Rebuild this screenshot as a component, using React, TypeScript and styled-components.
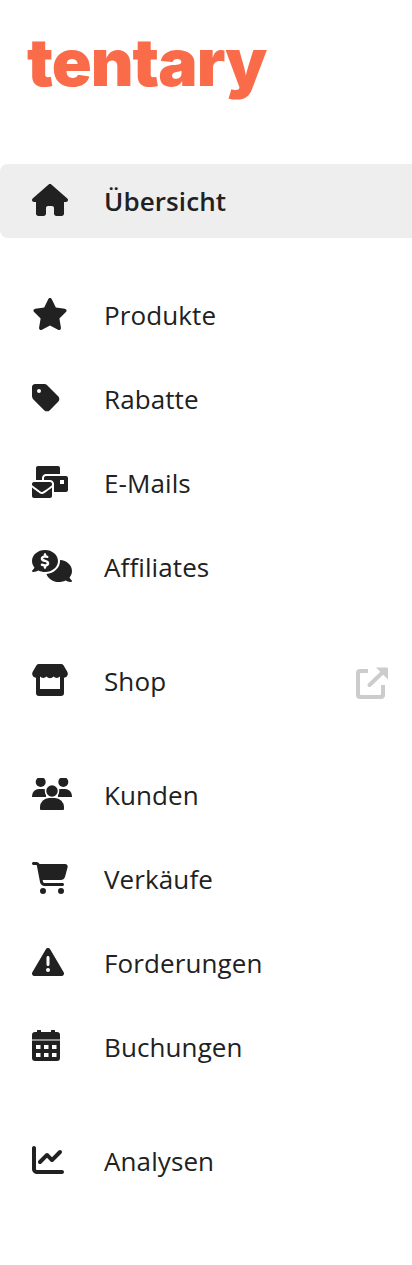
import React from "react";
import styled, { createGlobalStyle } from "styled-components";
import { FaMailBulk } from "react-icons/fa";
import {
  FaHouse,
  FaStar,
  FaTag,
  FaCommentsDollar,
  FaCartShopping,
  FaTriangleExclamation,
  FaChartLine,
} from "react-icons/fa6";

const GlobalStyle = createGlobalStyle`
  html, body {
    margin: 0;
    padding: 0;
    background: #ffffff;
  }
`;

const Sidebar = styled.nav`
  width: 412px;
  height: 1265px;
  overflow: hidden;
  display: flex;
  flex-direction: column;
  font-family: "Open Sans", "Noto Sans", sans-serif;
  color: #212121;
`;

const LogoBox = styled.div`
  height: 164px;
  padding-left: 27px;
  box-sizing: border-box;
`;

const Logo = styled.span`
  display: block;
  font-family: Inter, sans-serif;
  font-size: 66px;
  font-weight: 900;
  line-height: 124px;
  letter-spacing: -1px;
  color: #fa6b4a;
`;

const Group = styled.div`
  display: flex;
  flex-direction: column;
  gap: 10px;
  margin-bottom: 40px;
`;

const Row = styled.a<{ $active?: boolean }>`
  height: 74px;
  display: flex;
  align-items: center;
  padding: 0 24px 0 32px;
  border-radius: ${(p) => (p.$active ? "8px 0 0 8px" : "0")};
  background: ${(p) => (p.$active ? "#eeeeee" : "transparent")};
  font-size: 26px;
  letter-spacing: 0.1px;
  font-weight: ${(p) => (p.$active ? 600 : 400)};
`;

/* icons are 32px high, their width follows the glyph like the FA font does */
const IconBox = styled.span<{ $width: number }>`
  width: 72px;
  height: 36px;
  flex: none;
  display: flex;
  align-items: center;
  margin-top: -2px;

  svg {
    height: 32px;
    width: ${(p) => p.$width}px;
  }
`;

const Label = styled.span`
  flex: 1;
`;

const External = styled.svg`
  width: 32px;
  height: 32px;
  margin-top: 4px;
  fill: #cccccc;
`;

const ExternalShaft = styled.line`
  stroke: #cccccc;
  stroke-width: 4;
  stroke-linecap: round;
`;

const ShopIcon = () => (
  <svg viewBox="0 0 36 32" fill="currentColor">
    <path d="M7 0h22a3 3 0 0 1 2.500 1.300l3.500 6a4 4 0 0 1-2 6.200 4.500 4.500 0 0 1-5-1 4.500 4.500 0 0 1-6.500 0 4.500 4.500 0 0 1-7 0 4.500 4.500 0 0 1-6.500 0 4.500 4.500 0 0 1-5 1 4 4 0 0 1-2-6.200l3.500-6A3 3 0 0 1 7 0z" />
    <path d="M4 12h4v13h20V12h4v17a3 3 0 0 1-3 3H7a3 3 0 0 1-3-3z" />
  </svg>
);

const UsersIcon = () => (
  <svg viewBox="0 0 40 32" fill="currentColor">
    <circle cx="8.700" cy="4" r="5" />
    <circle cx="31.300" cy="4" r="5" />
    <path d="M0 19v-1a7 7 0 0 1 7-7h4a7 7 0 0 1 3 .7V19z" />
    <path d="M40 19v-1a7 7 0 0 0-7-7h-4a7 7 0 0 0-3 .7V19z" />
    <circle cx="20" cy="13" r="6.500" stroke="#ffffff" strokeWidth="1.500" />
    <path d="M8 31v-2a9 9 0 0 1 9-9h6a9 9 0 0 1 9 9v2a1 1 0 0 1-1 1H9a1 1 0 0 1-1-1z" />
  </svg>
);

const CalendarIcon = () => (
  <svg viewBox="0 0 28 32" fill="currentColor">
    <rect x="5" y="-1" width="4" height="6" rx="2" />
    <rect x="19" y="-1" width="4" height="6" rx="2" />
    <path d="M3 2h22a3 3 0 0 1 3 3v4.500H0V5a3 3 0 0 1 3-3z" />
    <path
      fillRule="evenodd"
      d="M0 10.500h28V28a3 3 0 0 1-3 3H3a3 3 0 0 1-3-3zM4 15v4h4.500v-4zM12 15v4h4.500v-4zM20 15v4h4.500v-4zM4 23v4h4.500v-4zM12 23v4h4.500v-4zM20 23v4h4.500v-4z"
    />
  </svg>
);

type Item = {
  icon: React.ReactNode;
  width: number;
  label: string;
  active?: boolean;
  external?: boolean;
};

const groups: Item[][] = [
  [{ icon: <FaHouse />, width: 36, label: "Übersicht", active: true }],
  [
    { icon: <FaStar />, width: 36, label: "Produkte" },
    { icon: <FaTag />, width: 28, label: "Rabatte" },
    { icon: <FaMailBulk />, width: 36, label: "E-Mails" },
    { icon: <FaCommentsDollar />, width: 40, label: "Affiliates" },
  ],
  [{ icon: <ShopIcon />, width: 36, label: "Shop", external: true }],
  [
    { icon: <UsersIcon />, width: 40, label: "Kunden" },
    { icon: <FaCartShopping />, width: 36, label: "Verkäufe" },
    { icon: <FaTriangleExclamation />, width: 32, label: "Forderungen" },
    { icon: <CalendarIcon />, width: 28, label: "Buchungen" },
  ],
  [{ icon: <FaChartLine />, width: 32, label: "Analysen" }],
];

export default function App() {
  return (
    <>
      <GlobalStyle />
      <Sidebar>
        <LogoBox>
          <Logo>tentary</Logo>
        </LogoBox>
        {groups.map((group, i) => (
          <Group key={i}>
            {group.map((item) => (
              <Row key={item.label} $active={item.active}>
                <IconBox $width={item.width}>{item.icon}</IconBox>
                <Label>{item.label}</Label>
                {item.external && (
                  <External viewBox="0 0 32 32">
                    <path d="M4 2h8v4H5a1 1 0 0 0-1 1v20a1 1 0 0 0 1 1h19a1 1 0 0 0 1-1v-9h4v10a4 4 0 0 1-4 4H4a4 4 0 0 1-4-4V6a4 4 0 0 1 4-4z" />
                    <path d="M20 0.500h11a1 1 0 0 1 1 1v11z" />
                    <ExternalShaft x1="13.500" y1="18" x2="26" y2="6" />
                  </External>
                )}
              </Row>
            ))}
          </Group>
        ))}
      </Sidebar>
    </>
  );
}
